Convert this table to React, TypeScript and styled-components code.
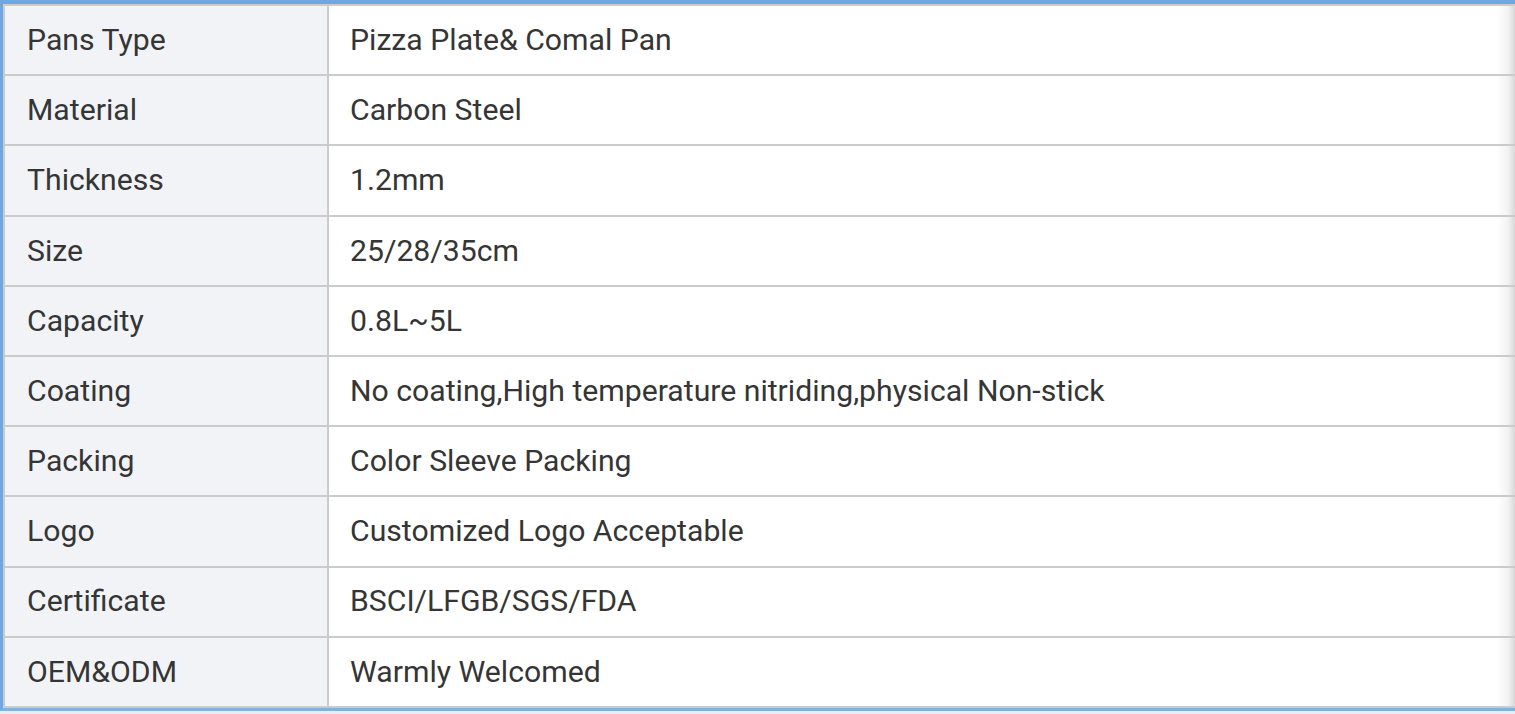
import styled, { createGlobalStyle } from 'styled-components';

const GlobalStyle = createGlobalStyle`
  html, body {
    margin: 0;
    padding: 0;
    background: #ececec;
    overflow: hidden;
  }
  body {
    font-family: Roboto, "Liberation Sans", Arial, sans-serif;
  }
`;

const Frame = styled.div`
  width: 1540px;
  border-top: 4px solid #6ea8e4;
  border-left: 3px solid #6ea8e4;
  border-bottom: 3px solid #84b1dc;
  background: #fff;
`;

const SpecTable = styled.table`
  width: 1512px;
  border-collapse: collapse;
  border: 2px solid #cbcbcb;
  border-right: none;
  color: #353535;
  font-size: 30.2px;
`;

const Row = styled.tr`
  height: 70.2px;
`;

// value cells fade into a soft grey edge at the right, like the cut-off reference
const Cell = styled.td<{ $label?: boolean }>`
  border: 2px solid #cbcbcb;
  padding: 0 0 0 ${(p) => (p.$label ? '22px' : '21px')};
  width: ${(p) => (p.$label ? '300px' : 'auto')};
  background: ${(p) =>
    p.$label
      ? '#f2f3f7'
      : 'linear-gradient(to right, #ffffff calc(100% - 18px), #f2f2f2 calc(100% - 7px), #d8d8d8 100%)'};
  border-right: ${(p) => (p.$label ? '2px solid #cbcbcb' : 'none')};
  white-space: nowrap;
  vertical-align: middle;
  line-height: 1.2;
`;

const specs: [string, string][] = [
  ['Pans Type', 'Pizza Plate& Comal Pan'],
  ['Material', 'Carbon Steel'],
  ['Thickness', '1.2mm'],
  ['Size', '25/28/35cm'],
  ['Capacity', '0.8L~5L'],
  ['Coating', 'No coating,High temperature nitriding,physical Non-stick'],
  ['Packing', 'Color Sleeve Packing'],
  ['Logo', 'Customized Logo Acceptable'],
  ['Certificate', 'BSCI/LFGB/SGS/FDA'],
  ['OEM&ODM', 'Warmly Welcomed'],
];

const App = () => (
  <>
    <GlobalStyle />
    <Frame>
      <SpecTable>
        <tbody>
          {specs.map(([label, value]) => (
            <Row key={label}>
              <Cell $label>{label}</Cell>
              <Cell>{value}</Cell>
            </Row>
          ))}
        </tbody>
      </SpecTable>
    </Frame>
  </>
);

export default App;
